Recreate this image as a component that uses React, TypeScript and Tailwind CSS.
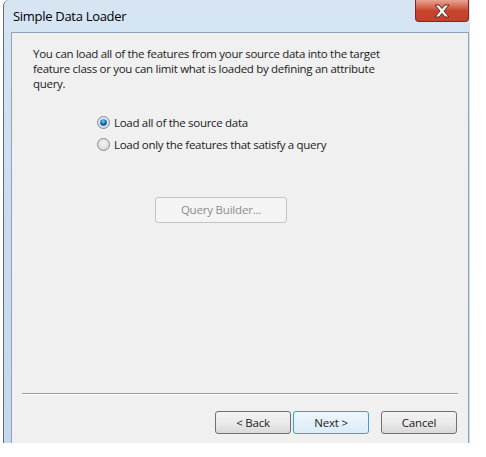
import React from "react";

const font = { fontFamily: '"Open Sans", "Noto Sans", sans-serif' };

function Radio({ checked }: { checked: boolean }) {
  return (
    <svg width="13" height="13" viewBox="0 0 13 13" className="shrink-0">
      <defs>
        <radialGradient id={checked ? "rgc" : "rgu"} cx="50%" cy="40%" r="60%">
          <stop offset="0%" stopColor={checked ? "#e8f4fc" : "#f4f4f4"} />
          <stop offset="100%" stopColor={checked ? "#c8dbea" : "#d6d6d6"} />
        </radialGradient>
        <radialGradient id="dot" cx="45%" cy="35%" r="65%">
          <stop offset="0%" stopColor="#8ed2f7" />
          <stop offset="55%" stopColor="#1f6fb5" />
          <stop offset="100%" stopColor="#0b3c73" />
        </radialGradient>
      </defs>
      <circle cx="6.5" cy="6.5" r="6" fill={`url(#${checked ? "rgc" : "rgu"})`} stroke="#8a8a8a" strokeWidth="1" />
      {checked && <circle cx="6.5" cy="6.5" r="3.3" fill="url(#dot)" />}
    </svg>
  );
}

function Btn({ children, focused, disabled, className = "" }: { children: React.ReactNode; focused?: boolean; disabled?: boolean; className?: string }) {
  return (
    <div
      className={`flex items-center justify-center rounded-[3px] border text-[11.5px] tracking-[-0.2px] ${
        focused ? "border-[#3c9fd6] bg-gradient-to-b from-[#edf6fc] to-[#dcecf8]" : disabled ? "border-[#c4c4c4] bg-[#f4f4f4]" : "border-[#707070] bg-gradient-to-b from-[#f2f2f2] via-[#ebebeb] to-[#d9d9d9]"
      } ${disabled ? "text-[#8d8d8d]" : "text-[#1a1a1a]"} ${className}`}
      style={font}
    >
      {children}
    </div>
  );
}

export default function App() {
  return (
    <div className="w-[486px] h-[457px] bg-white relative overflow-hidden" style={font}>
      <div className="ml-[3px] w-[467px] h-[443px] flex flex-col border-l border-[#6a6a6a] rounded-tl-[6px] bg-gradient-to-b from-[#d7e5f3] via-[#c9dcef] to-[#c4d9ee] relative">
        {/* title bar */}
        <div className="h-[32px] flex items-start pl-[9px] pt-[7px] text-[13px] tracking-[-0.3px] text-black">Simple Data Loader</div>
        <div className="absolute right-[1px] top-0 w-[54px] h-[22px] rounded-b-[4px] border border-[#7a2a1e] border-t-0 bg-gradient-to-b from-[#e8a493] via-[#c9452c] to-[#c2412a] flex items-center justify-center">
          <svg width="20" height="14" viewBox="0 0 20 14">
            <path d="M3 1 L7 1 L10 4.5 L13 1 L17 1 L12 7 L17 13 L13 13 L10 9.5 L7 13 L3 13 L8 7 Z" fill="#f4f4f4" stroke="#5a2a22" strokeWidth="1" />
          </svg>
        </div>
        <div className="flex flex-1 pl-[7px] pr-[1px]">
          <div className="flex-1 border-t border-l border-r border-[#8ea4bb] bg-[#f0f0f0] flex flex-col">
            <div className="pl-[21px] pt-[13px] text-[11.5px] tracking-[-0.3px] leading-[15px] text-[#1b1b1b] w-[390px]">
              You can load all of the features from your source data into the target feature class or you can limit what is loaded by defining an attribute query.
            </div>
            <div className="pl-[85px] pt-[25px] flex flex-col gap-[9px] text-[11.5px] tracking-[-0.3px] text-[#1b1b1b]">
              <div className="flex items-center gap-[4px] h-[13px]"><Radio checked />Load all of the source data</div>
              <div className="flex items-center gap-[4px] h-[13px]"><Radio checked={false} />Load only the features that satisfy a query</div>
            </div>
            <div className="pl-[143px] pt-[46px]">
              <Btn disabled className="w-[132px] h-[26px]">Query Builder...</Btn>
            </div>
            <div className="flex-1" />
            <div className="mx-[10px] h-[2px] border-t border-[#a0a0a0] border-b border-b-white" />
            <div className="flex justify-end pr-[11px] pt-[16px] pb-[9px]">
              <Btn className="w-[76px] h-[23px]">&lt; Back</Btn>
              <Btn focused className="w-[76px] h-[23px] ml-[2px]">Next &gt;</Btn>
              <Btn className="w-[76px] h-[23px] ml-[12px]">Cancel</Btn>
            </div>
          </div>
        </div>
      </div>
    </div>
  );
}
